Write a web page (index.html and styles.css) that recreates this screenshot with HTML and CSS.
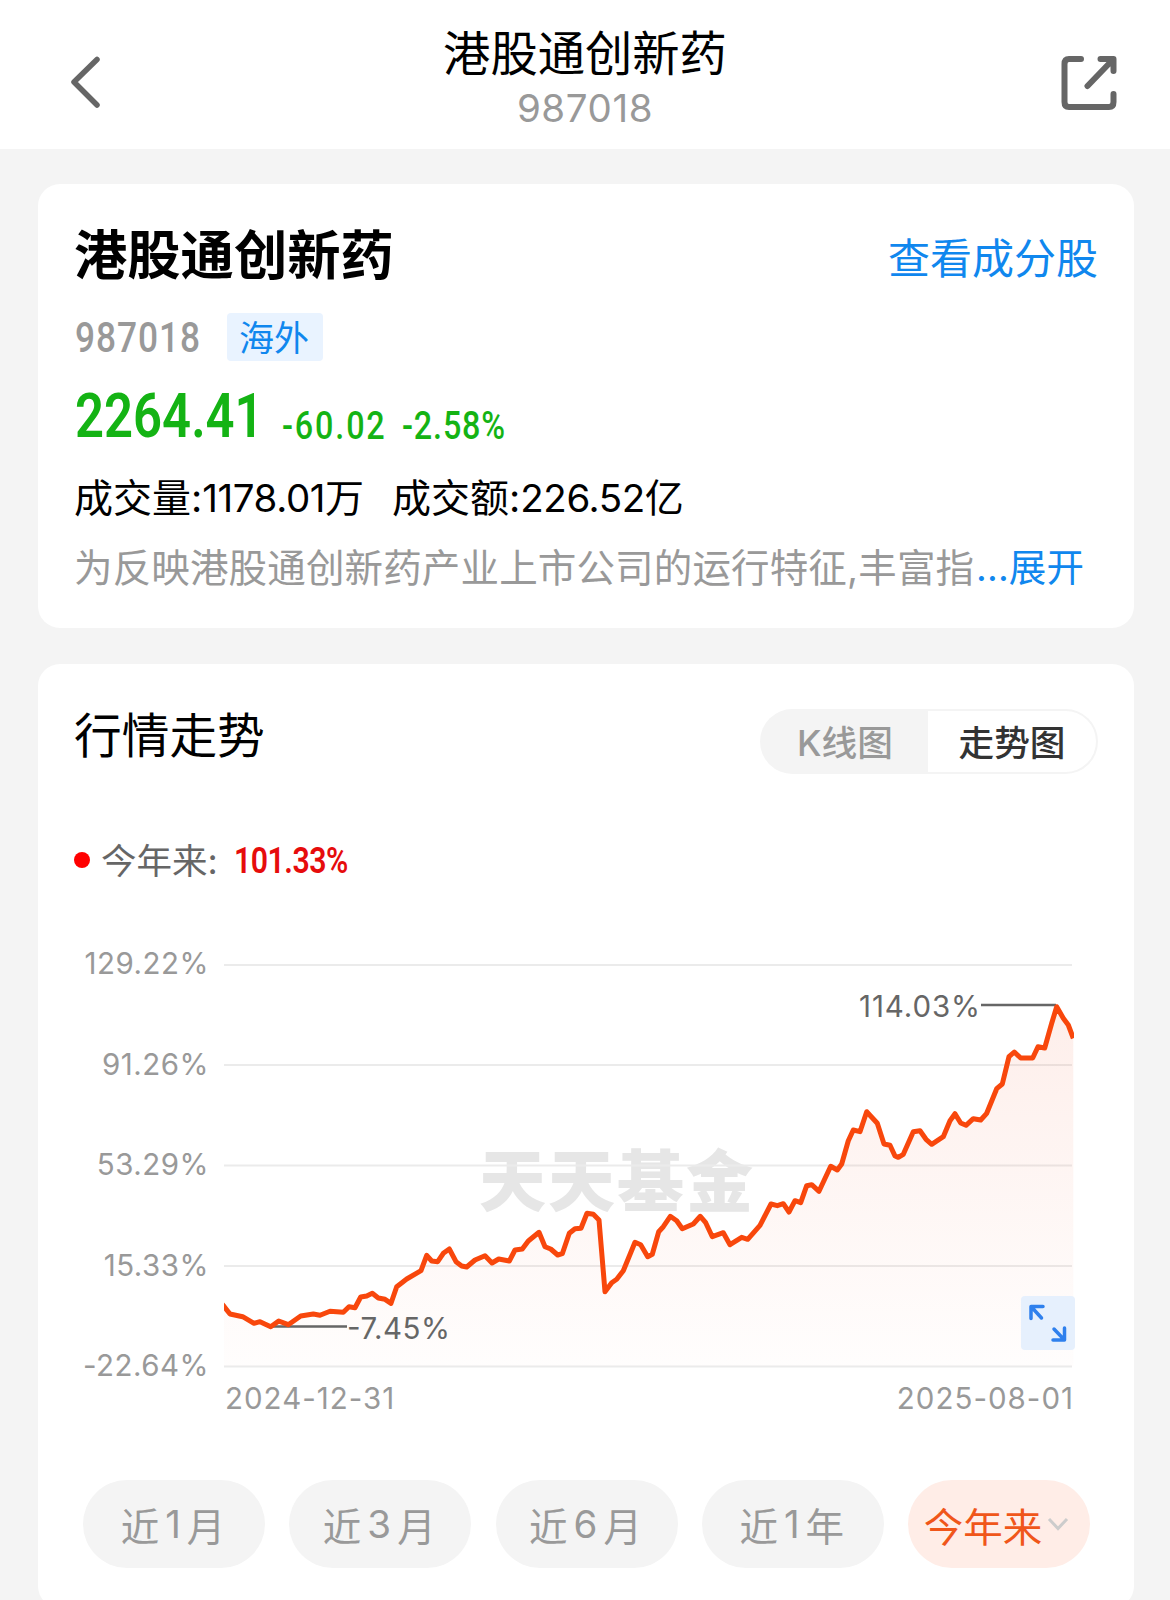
FILE: index.html
```html
<!DOCTYPE html>
<html lang="zh-CN">
<head>
  <meta charset="UTF-8">
  <title>港股通创新药</title>
  <meta name="viewport" content="width=device-width, initial-scale=1.0">
  <link rel="stylesheet" href="styles.css">
</head>
<body>
  <header class="header">
    <svg class="back" viewBox="0 0 40 56" width="40" height="56">
      <path d="M33 5.500L10 28L33 51" />
    </svg>
    <div class="header-title">
      <h1>港股通创新药</h1>
      <p>987018</p>
    </div>
    <svg class="share" viewBox="0 0 56 56" width="56" height="56">
      <path d="M20 4 H8 Q3.500 4 3.500 9 V47 Q3.500 52 8 52 H48 Q52.500 52 52.500 47 V39" />
      <path d="M39.500 4 H52.500 V16 M52 4.500 L26.500 31" />
    </svg>
  </header>

  <section class="card info">
    <div class="info-head">
      <h2>港股通创新药</h2>
      <a class="link">查看成分股</a>
    </div>
    <div class="code-row">
      <span class="code"><span class="din">987018</span></span>
      <span class="tag">海外</span>
    </div>
    <div class="price-row">
      <span class="price"><span class="din">2264.41</span></span>
      <span class="change"><span class="din">-60.02</span></span>
      <span class="change percent"><span class="din">-2.58%</span></span>
    </div>
    <div class="volume-row">
      <span class="volume">成交量:<span class="num">1178.01</span>万</span>
      <span class="amount">成交额:<span class="num">226.52</span>亿</span>
    </div>
    <div class="desc">
      <span>为反映港股通创新药产业上市公司的运行特征,丰富指</span>
      <a class="more">...展开</a>
    </div>
  </section>

  <section class="card trend">
    <div class="trend-head">
      <h3>行情走势</h3>
      <div class="toggle">
        <span class="toggle-item">K线图</span>
        <span class="toggle-item active">走势图</span>
      </div>
    </div>

    <div class="legend">
      <i class="dot"></i>
      <span class="legend-name">今年来:</span>
      <span class="legend-value"><span class="din">101.33%</span></span>
    </div>

    <div class="chart">
      <div class="y-axis">
        <span>129.22%</span>
        <span>91.26%</span>
        <span>53.29%</span>
        <span>15.33%</span>
        <span>-22.64%</span>
      </div>
      <div class="plot">
        <svg viewBox="224 950 852 420" width="852" height="420">
          <defs>
            <linearGradient id="area" x1="0" y1="1006" x2="0" y2="1366" gradientUnits="userSpaceOnUse">
              <stop offset="0" stop-color="#f0461a" stop-opacity="0.09" />
              <stop offset="1" stop-color="#f0461a" stop-opacity="0.01" />
            </linearGradient>
            <clipPath id="clip"><rect x="224" y="950" width="850" height="420" /></clipPath>
          </defs>
          <text class="watermark" x="479" y="1206" textLength="274">天天基金</text>
          <path class="grid" d="M224 965H1072M224 1065H1072M224 1165.500H1072M224 1266H1072M224 1366.500H1072" />
          <g clip-path="url(#clip)">
            <path id="fill" class="area" />
            <path class="pointer" d="M271 1326.500H347M981 1005H1056" />
            <path id="line" class="line" />
          </g>
          <text class="mark" x="347" y="1338.500" textLength="103">-7.45%</text>
          <text class="mark" x="859" y="1016.500" textLength="121">114.03%</text>
        </svg>
        <svg class="expand" viewBox="0 0 54 54" width="54" height="54">
          <path d="M22 10.500H10V22.500M10.500 11L20.500 22" />
          <path d="M32 44H43.500V32M43 43.500L33 33" />
        </svg>
        <div class="x-axis">
          <span>2024-12-31</span>
          <span>2025-08-01</span>
        </div>
      </div>
    </div>

    <div class="ranges">
      <span class="range">近<b>1</b>月</span>
      <span class="range">近<b>3</b>月</span>
      <span class="range">近<b>6</b>月</span>
      <span class="range">近<b>1</b>年</span>
      <span class="range active">今年来
        <svg viewBox="0 0 22 14" width="22" height="14"><path d="M2 2L11 11.500L20 2" /></svg>
      </span>
    </div>
  </section>

  <script src="chart.js"></script>
</body>
</html>
```
FILE: styles.css
```css
* {
  margin: 0;
  padding: 0;
  box-sizing: border-box;
}

html, body {
  height: 1600px;
  overflow: hidden;
}

body {
  background: #f4f4f4;
  font-family: Inter, "Noto Sans CJK SC", sans-serif;
  color: #000;
}

h1, h2, h3 {
  font-weight: 400;
}

.header {
  display: flex;
  justify-content: space-between;
  height: 149px;
  padding: 0 53px 0 64px;
  background: #fff;
}

.header svg {
  fill: none;
  stroke: #666;
  stroke-linecap: round;
  stroke-linejoin: round;
}

.back {
  margin-top: 54px;
  stroke-width: 5.5;
}

.share {
  margin-top: 55px;
  stroke-width: 6;
}

.header-title {
  padding-top: 24px;
  padding-left: 5px;
  text-align: center;
}

.header-title h1 {
  font-size: 47.3px;
  line-height: 60px;
}

.header-title p {
  margin-top: -1px;
  font-size: 38.5px;
  line-height: 50px;
  letter-spacing: 0.6px;
  color: #999;
}

.card {
  margin: 0 36px 0 38px;
  background: #fff;
  border-radius: 22px;
}

.info {
  height: 444px;
  margin-top: 35px;
  padding: 34px 37px 0;
}

.info-head {
  display: flex;
  justify-content: space-between;
  align-items: center;
  height: 70px;
}

.info-head h2 {
  padding-top: 6px;
  font-size: 53.3px;
  font-weight: 700;
  line-height: 70px;
  margin-left: -1px;
}

.link {
  padding-top: 12px;
  margin-right: -1px;
  font-size: 42px;
  line-height: 60px;
  color: #1087ee;
}

/* condensed figures */
.din {
  display: inline-block;
  font-family: Roboto, sans-serif;
  transform: scaleX(0.84);
  transform-origin: 0 50%;
}

.code-row {
  display: flex;
  align-items: center;
  height: 50px;
  margin-top: 24px;
}

.code {
  width: 152px;
  font-size: 42px;
  font-weight: 500;
  line-height: 50px;
  letter-spacing: 1.1px;
  color: #999;
}

.tag {
  width: 96px;
  height: 48px;
  border-radius: 4px;
  background: #e9f3ff;
  color: #1087ee;
  font-size: 35px;
  line-height: 50px;
  text-align: center;
  text-indent: -2px;
}

.price-row {
  display: flex;
  align-items: baseline;
  height: 70px;
  margin-top: 16px;
  color: #14b314;
}

.price {
  position: relative;
  top: 2px;
  width: 207px;
  font-size: 60.5px;
  font-weight: 600;
  line-height: 70px;
}

.change {
  position: relative;
  top: 4px;
  width: 120px;
  font-size: 38.5px;
  font-weight: 500;
  letter-spacing: 2.2px;
}

.percent {
  letter-spacing: 1px;
}

.volume-row {
  display: flex;
  height: 50px;
  margin-top: 25px;
  font-size: 39px;
  line-height: 50px;
}

.volume {
  width: 318px;
}

.volume,
.amount {
  margin-left: -1px;
  margin-right: 1px;
}

.num {
  font-size: 38.5px;
  letter-spacing: -0.4px;
}

.desc {
  display: flex;
  height: 50px;
  margin-top: 20px;
  font-size: 38.5px;
  line-height: 50px;
  letter-spacing: 0.15px;
  color: #999;
  white-space: nowrap;
}

.desc span {
  width: 902px;
  margin-left: -1px;
}

.more {
  font-size: 37.5px;
  color: #1087ee;
}

.trend {
  height: 944px;
  margin-top: 36px;
  padding: 45px 36px 0;
}

.trend-head {
  display: flex;
  justify-content: space-between;
  height: 65px;
}

.trend-head h3 {
  font-size: 47.7px;
  line-height: 54px;
}

.toggle {
  display: flex;
  width: 338px;
  height: 65px;
  padding: 2px;
  border-radius: 33px;
  background: #f4f4f4;
}

.toggle-item {
  width: 166px;
  font-size: 35.7px;
  font-weight: 500;
  line-height: 64px;
  text-align: center;
  color: #999;
}

.toggle-item.active {
  width: 168px;
  height: 61px;
  border-radius: 0 31px 31px 0;
  background: #fff;
  color: #333;
}

.legend {
  display: flex;
  align-items: center;
  height: 40px;
  margin-top: 66px;
  line-height: 40px;
}

.dot {
  width: 16px;
  height: 16px;
  margin-right: 11px;
  border-radius: 50%;
  background: #f00;
}

.legend-name {
  width: 133px;
  padding-top: 3px;
  font-size: 35.5px;
  color: #666;
}

.legend-value {
  font-size: 36px;
  font-weight: 600;
  letter-spacing: -0.6px;
  color: #e60c0c;
}

.chart {
  display: flex;
  margin-top: 70px;
}

.y-axis {
  display: flex;
  flex-direction: column;
  justify-content: space-between;
  width: 135px;
  height: 430px;
  margin: -1px 15px 0 0;
  font-size: 29.5px;
  line-height: 28px;
  letter-spacing: 0.5px;
  text-align: right;
  color: #999;
}

.plot {
  position: relative;
  width: 852px;
}

.plot svg {
  display: block;
}

.grid {
  stroke: #ebebeb;
  stroke-width: 2;
}

.watermark {
  font-family: "Noto Sans CJK SC", sans-serif;
  font-size: 67px;
  font-weight: 900;
  fill: #e6e6e6;
}

.area {
  fill: url(#area);
}

.line {
  fill: none;
  stroke: #f8470c;
  stroke-width: 5;
  stroke-linejoin: round;
}

.pointer {
  stroke: #666;
  stroke-width: 2.5;
}

.mark {
  font-size: 29.5px;
  fill: #666;
}

/* fullscreen button floats over the plot */
.plot .expand {
  position: absolute;
  left: 797px;
  top: 346px;
  border-radius: 4px;
  background: #e6f0fd;
  fill: none;
  stroke: #2f80ed;
  stroke-width: 3.5;
  stroke-linecap: round;
  stroke-linejoin: round;
}

.x-axis {
  display: flex;
  justify-content: space-between;
  width: 850px;
  margin-top: 13px;
  padding-left: 1px;
  font-size: 29.5px;
  line-height: 30px;
  letter-spacing: 1px;
  color: #999;
}

.ranges {
  display: flex;
  justify-content: space-between;
  width: 1007px;
  margin: 67px 0 0 9px;
}

.range {
  display: flex;
  justify-content: center;
  align-items: center;
  width: 182px;
  height: 88px;
  padding-right: 2px;
  border-radius: 44px;
  background: #f4f4f4;
  color: #999;
  font-size: 38.5px;
}

.range b {
  margin: 0 6px;
  font-weight: 400;
}

.range.active {
  padding-right: 5px;
  background: #ffede7;
  color: #f0561a;
  font-size: 39.5px;
}

.range svg {
  margin-left: 5px;
  fill: none;
  stroke: #ccc;
  stroke-width: 3;
}
```
FILE: chart.js
```js
const points = [
  [222, 1304], [224.3, 1306.7], [230, 1314], [242.7, 1316.7], [254, 1323.3], [260, 1321.7], [270.7, 1326.7], [278.7, 1321],
  [288.3, 1324.7], [300.7, 1316], [313.3, 1314], [320, 1315.3], [330, 1311.3], [343.3, 1312.3], [349, 1306.7],
  [355, 1307.7], [360.7, 1297], [366.7, 1296], [372.3, 1293.3], [378.3, 1298], [385, 1299.3], [391, 1303.3],
  [396.7, 1286.7], [406.7, 1279], [421, 1270.7], [426.7, 1255.3], [431.7, 1261], [437.7, 1261.7], [443.3, 1253.3],
  [449.3, 1249], [456, 1261.7], [461.7, 1266], [466.7, 1267], [475, 1260], [485, 1255.7], [492, 1263],
  [498.7, 1259], [509.3, 1261], [515, 1250], [522.3, 1249], [528.3, 1241], [539, 1232.3], [545, 1246.7],
  [550.7, 1249], [557.7, 1255], [562.3, 1253.7], [569.3, 1233.3], [575, 1228.7], [581, 1228.3], [587, 1213.3],
  [593.3, 1214.3], [599, 1220], [605, 1291.7], [611.7, 1282.7], [616.7, 1279.3], [623.3, 1270.7], [635, 1242.3],
  [640.7, 1244.7], [647.7, 1256.7], [652.3, 1254.3], [658.7, 1231.7], [663.3, 1226.7], [670.3, 1216.3],
  [676.7, 1220.7], [682.3, 1228.7], [693.3, 1224], [700.3, 1216.3], [705.7, 1222.7], [712.3, 1236.7],
  [723.3, 1232.7], [730, 1244.7], [741.7, 1237.3], [747.7, 1239.3], [760, 1225.3], [771, 1204], [777.3, 1205.7],
  [783.3, 1203.7], [789, 1212], [795, 1200.7], [800.7, 1202.7], [806.7, 1185.7], [811.7, 1184.7], [819, 1191.3],
  [830.7, 1166.3], [837.3, 1170], [841.7, 1164], [848.3, 1140.7], [853.3, 1130], [860, 1131.7], [866.7, 1111.7],
  [877.3, 1123.3], [884, 1144], [890, 1145.3], [895, 1156], [898.3, 1157.3], [903.3, 1154.3], [913.3, 1131.7],
  [920, 1130.7], [926, 1139.3], [931.7, 1144.3], [943.3, 1136.7], [950, 1120.7], [955, 1113.7], [960.7, 1123],
  [966, 1125.3], [973.3, 1118.7], [980.7, 1120], [986.7, 1113.3], [996.7, 1088.7], [1002.3, 1084],
  [1009, 1056.7], [1014.3, 1052], [1020.7, 1058], [1032.7, 1058], [1038, 1046.7], [1044.7, 1048],
  [1051.7, 1023.3], [1056.7, 1006.7], [1063.3, 1018.3], [1068.3, 1025], [1073.3, 1038.3]
];

const d = "M" + points.map((p) => p.join(" ")).join("L");
document.getElementById("line").setAttribute("d", d);
document.getElementById("fill").setAttribute("d", d + "L1073.3 1366L222 1366Z");
```
